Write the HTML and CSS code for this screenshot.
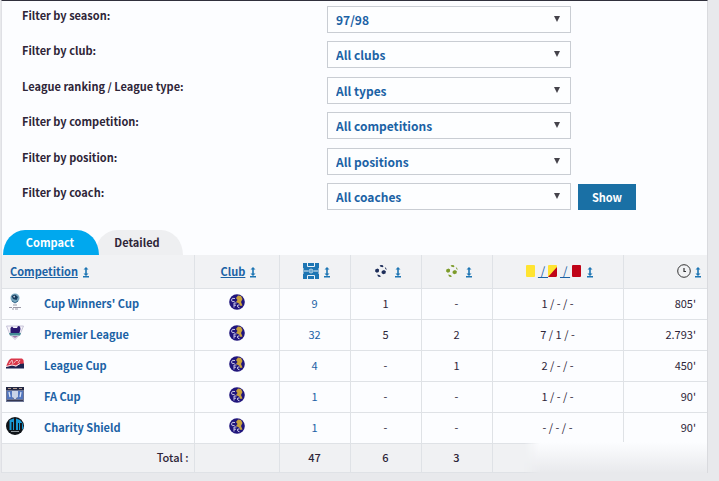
FILE: index.html
```html
<!DOCTYPE html>
<html lang="en">

<head>
    <meta charset="UTF-8">
    <meta name="viewport" content="width=device-width, initial-scale=1.0">
    <title>Player performance 97/98</title>
    <link rel="stylesheet" href="styles.css">
</head>

<body>

    <!-- Shared icons -->
    <svg class="sprite" aria-hidden="true">
        <symbol id="sort" viewBox="0 0 6 11">
            <path d="M3 0L5.5 2.5H3.8V6.500L5.5 6.500 3 9 .5 6.500H2.200V2.500H.5z" fill="#1d75b3" />
            <path d="M0 9H6V10.500H0z" fill="#1d75b3" />
        </symbol>
        <symbol id="chelsea" viewBox="0 0 16 16">
            <circle cx="8" cy="8" r="7.8" fill="#20157c" />
            <path d="M7 4L9 1.500 12 2 13.500 5 12 8 13.500 11.500 11.500 12 10 9.500 7 8 8.500 6z" fill="#c9a23c" />
            <path d="M6 4.500Q2.500 3.500 2.500 6T5.500 7.500M5 13.500V9H7.500M5 11.200H7M10.500 11Q8.300 10.500 8.400 12T10.500 13.800" fill="none" stroke="#dedaf2" stroke-width=".9" />
        </symbol>
        <symbol id="ball" viewBox="0 0 12 12">
            <path d="M4.700 .3L7.300 .1 8.600 1.300 7.500 2.200 5.200 1.500zM.3 4.600L2.500 3.400 4.100 4.500 3.800 7 1.800 7.800 .1 6.500zM6.800 6L9 5 10.900 6.200 10.500 8.500 8.200 9.300 6.500 7.900zM9.800 1.900L11.200 3.200 11.700 5 10.400 4zM2.200 9.600L4.200 9.900 6 11.200 4.800 12 3 11.500z" />
        </symbol>
    </svg>

    <main class="box">
        <form class="filters" onsubmit="return false">
            <div class="filter-row">
                <label for="season">Filter by season:</label>
                <span class="select"><select id="season"><option>97/98</option></select></span>
            </div>
            <div class="filter-row">
                <label for="club">Filter by club:</label>
                <span class="select"><select id="club"><option>All clubs</option></select></span>
            </div>
            <div class="filter-row">
                <label for="type">League ranking / League type:</label>
                <span class="select"><select id="type"><option>All types</option></select></span>
            </div>
            <div class="filter-row">
                <label for="competition">Filter by competition:</label>
                <span class="select"><select id="competition"><option>All competitions</option></select></span>
            </div>
            <div class="filter-row">
                <label for="position">Filter by position:</label>
                <span class="select"><select id="position"><option>All positions</option></select></span>
            </div>
            <div class="filter-row">
                <label for="coach">Filter by coach:</label>
                <span class="select"><select id="coach"><option>All coaches</option></select></span>
                <button class="show">Show</button>
            </div>
        </form>

        <nav class="tabs">
            <a class="tab active" href="#compact">Compact</a>
            <a class="tab" href="#detailed">Detailed</a>
        </nav>

        <div class="table-wrap">
            <table class="stats">
                <colgroup>
                    <col>
                    <col class="c-club">
                    <col class="c-num">
                    <col class="c-num">
                    <col class="c-num">
                    <col class="c-cards">
                    <col class="c-min">
                </colgroup>
                <thead>
                    <tr>
                        <th class="left"><a href="#"><u>Competition</u> <svg class="sort"><use href="#sort" /></svg></a></th>
                        <th><a href="#"><u>Club</u> <svg class="sort"><use href="#sort" /></svg></a></th>
                        <th>
                            <a href="#" aria-label="Appearances">
                                <svg class="pitch" viewBox="0 0 16 16">
                                    <path d="M0 0H16V16H0z" fill="#1d75b3" />
                                    <path d="M0 8H5.500M10.500 8H16M4.500 0V3.500H11.500V0M4.500 16V12.500H11.500V16" fill="none" stroke="#e9f1f7" />
                                    <path d="M0 5.500H1V6.500H0zM15 5.500H16V6.500H15zM0 9.500H1V10.500H0zM15 9.500H16V10.500H15z" fill="#e9f1f7" />
                                    <circle cx="8" cy="8" r="2" fill="#6fa9d0" stroke="#b9d6e8" stroke-width=".8" />
                                </svg>
                                <svg class="sort"><use href="#sort" /></svg>
                            </a>
                        </th>
                        <th><a href="#" aria-label="Goals"><svg class="ball"><use href="#ball" /></svg><svg class="sort"><use href="#sort" /></svg></a></th>
                        <th><a href="#" aria-label="Assists"><svg class="ball green"><use href="#ball" /></svg><svg class="sort"><use href="#sort" /></svg></a></th>
                        <th>
                            <a class="cards" href="#" aria-label="Cards">
                                <svg class="card" viewBox="0 0 9 12"><rect width="9" height="12" rx="1" fill="#ffe431" /></svg>
                                <u>&nbsp;/&nbsp;</u>
                                <svg class="card" viewBox="0 0 9 12"><rect width="9" height="12" rx="1" fill="#ffe431" /><path d="M9 2V11L8 12H0z" fill="#c00418" /></svg>
                                <u>&nbsp;/&nbsp;</u>
                                <svg class="card last" viewBox="0 0 9 12"><rect width="9" height="12" rx="1" fill="#c00418" /></svg>
                                <svg class="sort"><use href="#sort" /></svg>
                            </a>
                        </th>
                        <th class="minutes">
                            <a href="#" aria-label="Minutes played">
                                <svg class="clock" viewBox="0 0 14 14"><circle cx="7" cy="7" r="6.300" fill="none" stroke="#333" stroke-width="1" /><path d="M7 4V7.500H9" fill="none" stroke="#333" stroke-width="1.200" /></svg>
                                <svg class="sort"><use href="#sort" /></svg>
                            </a>
                        </th>
                    </tr>
                </thead>
                <tbody>
                    <tr>
                        <td class="left">
                            <div class="comp">
                                <svg class="logo" viewBox="0 0 18 18">
                                    <circle cx="9" cy="5" r="4.500" fill="#76a5bd" />
                                    <path d="M5.500 3L9 1.500 12 4 10.500 7 7 6z" fill="#173b5d" />
                                    <path d="M7 4L8.500 2.500 9 4.500z" fill="#e9f6fa" />
                                    <path d="M6 8L9 10 12 8" fill="none" stroke="#35678a" />
                                    <path d="M7 12H11M3 14.500H6M7 14.500H15M6 16H8M9 16H12" stroke="#817f91" stroke-width=".8" />
                                </svg>
                                <a href="#">Cup Winners' Cup</a>
                            </div>
                        </td>
                        <td><svg class="crest"><use href="#chelsea" /></svg></td>
                        <td><a href="#">9</a></td>
                        <td>1</td>
                        <td>-</td>
                        <td>1 / - / -</td>
                        <td class="minutes">805'</td>
                    </tr>
                    <tr>
                        <td class="left">
                            <div class="comp">
                                <svg class="logo" viewBox="0 0 18 18">
                                    <path d="M.5 2H17.500L14 10.500 9 15.500 4 10.500z" fill="#f6f4fa" stroke="#b3adc9" stroke-width=".7" />
                                    <path d="M4.500 4L6 2.500 7.500 4H11L12 2 14 2.500 14.500 5 13.500 9H4.500V5.500z" fill="#29176f" />
                                    <path d="M3 9H15L14 11.500H4z" fill="#448c96" />
                                    <path d="M6 12H12L9 14z" fill="#9e75aa" />
                                </svg>
                                <a href="#">Premier League</a>
                            </div>
                        </td>
                        <td><svg class="crest"><use href="#chelsea" /></svg></td>
                        <td><a href="#">32</a></td>
                        <td>5</td>
                        <td>2</td>
                        <td>7 / 1 / -</td>
                        <td class="minutes">2.793'</td>
                    </tr>
                    <tr>
                        <td class="left">
                            <div class="comp">
                                <svg class="logo" viewBox="0 0 18 18">
                                    <path d="M3 5L5 3.500H16L17.500 5 18 11 0 12 1 9z" fill="#d9374a" />
                                    <path d="M3 9L6 5 7 9M8 8L10 5.500H12M12 8L14 5" fill="none" stroke="#f5c9cc" stroke-width=".9" />
                                    <path d="M0 12L6 10.500 10 11.500 14 9 18 8.500V13.500H0z" fill="#1d2451" />
                                    <path d="M0 11.500L6 10 10 11 14 8.500" fill="none" stroke="#f4eef2" />
                                </svg>
                                <a href="#">League Cup</a>
                            </div>
                        </td>
                        <td><svg class="crest"><use href="#chelsea" /></svg></td>
                        <td><a href="#">4</a></td>
                        <td>-</td>
                        <td>1</td>
                        <td>2 / - / -</td>
                        <td class="minutes">450'</td>
                    </tr>
                    <tr>
                        <td class="left">
                            <div class="comp">
                                <svg class="logo" viewBox="0 0 18 18">
                                    <path d="M0 1H18V16H0z" fill="#6d7696" />
                                    <path d="M0 1H18V4H0z" fill="#242843" />
                                    <path d="M2 2.500H5M7 2.500H11M13 2.500H16" stroke="#b29d91" />
                                    <path d="M1 5H6L7 13H1zM12 5H17V13H11z" fill="#5276be" />
                                    <path d="M6 5H12V11L10 12V13H8V12L6 11z" fill="#c9d4e8" />
                                    <path d="M3 6L4 11M15 6L14 11" stroke="#d9e2f4" stroke-width="1.300" />
                                    <path d="M1 14.500H17" stroke="#353750" />
                                </svg>
                                <a href="#">FA Cup</a>
                            </div>
                        </td>
                        <td><svg class="crest"><use href="#chelsea" /></svg></td>
                        <td><a href="#">1</a></td>
                        <td>-</td>
                        <td>-</td>
                        <td>1 / - / -</td>
                        <td class="minutes">90'</td>
                    </tr>
                    <tr>
                        <td class="left">
                            <div class="comp">
                                <svg class="logo" viewBox="0 0 18 18">
                                    <circle cx="9" cy="9" r="9" fill="#101419" />
                                    <path d="M3.500 3L8 1.500V13H7V5H5.500V13H3.500zM10 1.500L14 3 16.500 6 17.500 11 16 13V6H14V13H13V6H12V13H10z" fill="#1799d6" />
                                    <path d="M5 14.500H13" stroke="#c8d0d5" stroke-width=".7" />
                                </svg>
                                <a href="#">Charity Shield</a>
                            </div>
                        </td>
                        <td><svg class="crest"><use href="#chelsea" /></svg></td>
                        <td><a href="#">1</a></td>
                        <td>-</td>
                        <td>-</td>
                        <td>- / - / -</td>
                        <td class="minutes">90'</td>
                    </tr>
                </tbody>
                <tfoot>
                    <tr>
                        <td class="total">Total :</td>
                        <td></td>
                        <td>47</td>
                        <td>6</td>
                        <td>3</td>
                        <td></td>
                        <td></td>
                    </tr>
                </tfoot>
            </table>
            <div class="fade"></div>
        </div>
    </main>

</body>

</html>
```
FILE: styles.css
```css
* {
    box-sizing: border-box;
}

body {
    margin: 0;
    background: #e8e9ec;
    color: #2e2538;
    font-family: "Noto Sans CJK SC", "Open Sans", sans-serif;
    font-size: 11px;
    line-height: 16px;
}

a {
    color: #1b62a5;
    text-decoration: none;
}

.sprite {
    position: absolute;
    width: 0;
    height: 0;
}

/* White content box */
.box {
    margin: 0 11px 0 1px;
    border-top: 1px solid #30303c;
    border-left: 1px solid #dfe0e5;
    border-right: 1px solid #d9dade;
    background: #fcfdff;
}

/* Filters */
.filters {
    display: flex;
    flex-direction: column;
    justify-content: space-between;
    min-height: 209px;
    padding: 5px 20px 0;
}

.filter-row {
    display: flex;
    align-items: flex-start;
}

.filter-row label {
    width: 305px;
    padding-top: 1px;
    font-weight: bold;
}

.select {
    position: relative;
    width: 244px;
}

.select::after {
    content: "";
    position: absolute;
    top: 10px;
    right: 11px;
    border: 3px solid transparent;
    border-top: 6px solid #45434b;
    border-bottom: 0;
    pointer-events: none;
}

.select select {
    display: block;
    width: 100%;
    height: 27px;
    padding: 0 8px;
    border: 1px solid #c9cdd3;
    border-radius: 0;
    background: #fdfeff;
    color: #1b62a5;
    font: bold 12px "Noto Sans CJK SC", "Open Sans", sans-serif;
    appearance: none;
}

.show {
    width: 58px;
    height: 26px;
    margin: 1px 0 0 7px;
    padding: 0;
    border: 0;
    background: #1a70a5;
    color: #fff;
    font: bold 11px "Noto Sans CJK SC", "Open Sans", sans-serif;
}

/* Tabs */
.tabs {
    display: flex;
    padding: 20px 0 0 1px;
}

.tab {
    width: 88px;
    height: 25px;
    margin-right: -4px;
    padding-right: 4px;
    border-radius: 22px 22px 0 0 / 25px 25px 0 0;
    background: #eeeff1;
    color: #2e2538;
    font-weight: bold;
    line-height: 25px;
    text-align: center;
}

.tab.active {
    position: relative;
    width: 96px;
    padding-right: 2px;
    background: #00a8ee;
    color: #fff;
}

/* Table */
.table-wrap {
    position: relative;
}

.stats {
    width: 100%;
    border-collapse: collapse;
    table-layout: fixed;
}

.c-club {
    width: 85px;
}

.c-num {
    width: 71px;
}

.c-cards {
    width: 131px;
}

.c-min {
    width: 84px;
}

.stats th,
.stats td {
    height: 31px;
    padding: 0 0 2px;
    border-right: 1px solid #dfe2e6;
    border-bottom: 1px solid #dfe2e6;
    text-align: center;
    vertical-align: middle;
}

.stats th:last-child,
.stats td:last-child {
    border-right: 0;
}

.stats th {
    height: 33px;
    padding: 0 0 0 4px;
    background: #f1f2f4;
}

.stats th a {
    display: flex;
    align-items: center;
    justify-content: center;
    gap: 5px;
}

.stats .left a {
    justify-content: flex-start;
}

.stats th.left {
    padding-left: 8px;
}

.stats .minutes {
    padding-right: 11px;
    text-align: right;
}

.stats th.minutes {
    padding-right: 6px;
}

.stats .minutes a {
    justify-content: flex-end;
    gap: 4px;
}

.comp {
    display: flex;
    align-items: center;
    gap: 20px;
    padding-left: 4px;
}

.comp a {
    font-weight: bold;
}

.sort {
    width: 6px;
    height: 11px;
    margin-top: 2px;
}

.pitch {
    width: 16px;
    height: 16px;
}

.ball {
    width: 12px;
    height: 12px;
    margin-right: 3px;
    fill: #1d2d59;
}

.ball.green {
    fill: #7c9b2a;
}

.stats th .cards {
    gap: 0;
    font-size: 12px;
    font-weight: normal;
}

.cards u {
    margin-left: 3px;
}

.card {
    width: 9px;
    height: 12px;
}

.card.last {
    margin: 0 6px 0 2px;
}

.clock {
    width: 14px;
    height: 14px;
}

.logo {
    width: 18px;
    height: 18px;
    margin-top: -2px;
}

.crest {
    display: block;
    width: 16px;
    height: 16px;
    margin: -2px auto 0;
}

.stats tfoot td {
    height: 29px;
    background: #f0f1f3;
    font-weight: 500;
}

.stats .total {
    padding-right: 5px;
    text-align: right;
}

/* Fades out the end of the footer row */
.fade {
    position: absolute;
    right: 0;
    bottom: 0;
    width: 26%;
    height: 31px;
    background: linear-gradient(#fcfdff, #e8e9ec);
    mask-image: linear-gradient(to right, transparent, #000 16px);
}
```
